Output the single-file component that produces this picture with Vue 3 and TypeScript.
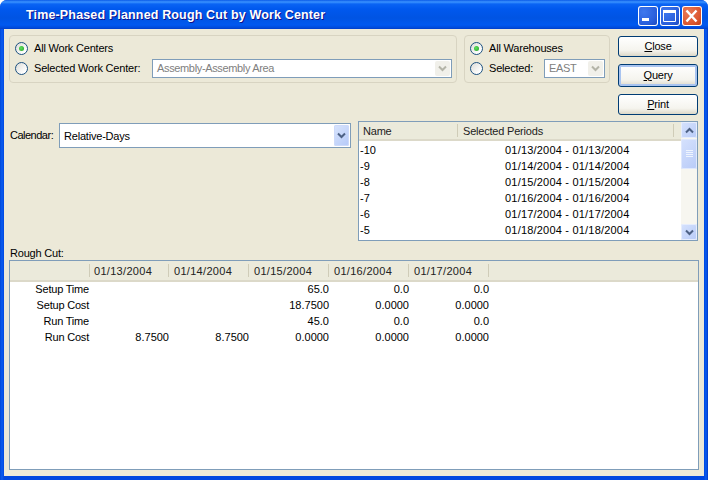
<script setup lang="ts">
const periods = [
  { name: '-10', range: '01/13/2004 - 01/13/2004' },
  { name: '-9', range: '01/14/2004 - 01/14/2004' },
  { name: '-8', range: '01/15/2004 - 01/15/2004' },
  { name: '-7', range: '01/16/2004 - 01/16/2004' },
  { name: '-6', range: '01/17/2004 - 01/17/2004' },
  { name: '-5', range: '01/18/2004 - 01/18/2004' },
]

const dates = ['01/13/2004', '01/14/2004', '01/15/2004', '01/16/2004', '01/17/2004']

const rows = [
  { label: 'Setup Time', values: ['', '', '65.0', '0.0', '0.0'] },
  { label: 'Setup Cost', values: ['', '', '18.7500', '0.0000', '0.0000'] },
  { label: 'Run Time', values: ['', '', '45.0', '0.0', '0.0'] },
  { label: 'Run Cost', values: ['8.7500', '8.7500', '0.0000', '0.0000', '0.0000'] },
]
</script>

<template>
  <div class="window">
    <header class="titlebar">
      <span class="title">Time-Phased Planned Rough Cut by Work Center</span>
      <div class="caption-buttons">
        <span class="cap cap-blue">
          <svg width="20" height="20" viewBox="0 0 20 20"><rect x="4" y="12" width="7" height="3" fill="#fff" /></svg>
        </span>
        <span class="cap cap-blue">
          <svg width="20" height="20" viewBox="0 0 20 20"><path d="M3.5 4.5h12v11h-12z" fill="none" stroke="#fff" /><rect x="3" y="4" width="13" height="3" fill="#fff" /></svg>
        </span>
        <span class="cap cap-red">
          <svg width="20" height="20" viewBox="0 0 20 20"><path d="M4.5 4.5l10 11M14.5 4.5l-10 11" fill="none" stroke="#fff" stroke-width="2.4" /></svg>
        </span>
      </div>
    </header>

    <main class="content">
      <div class="top">
        <section class="group group-centers">
          <div class="radio-row">
            <span class="radio on"></span>
            <span class="tight">All Work Centers</span>
          </div>
          <div class="radio-row">
            <span class="radio"></span>
            <span class="radio-label tight">Selected Work Center:</span>
            <div class="combo disabled wc-combo">
              <span class="combo-text">Assembly-Assembly Area</span>
              <span class="combo-btn">
                <svg width="9" height="7" viewBox="0 0 9 7"><path d="M1 1.5l3.5 3.5 3.5-3.5" fill="none" stroke="#b4b4a8" stroke-width="2" /></svg>
              </span>
            </div>
          </div>
        </section>

        <section class="group group-wh">
          <div class="radio-row">
            <span class="radio on"></span>
            <span class="tight">All Warehouses</span>
          </div>
          <div class="radio-row">
            <span class="radio"></span>
            <span class="radio-label wh-label tight">Selected:</span>
            <div class="combo disabled wh-combo">
              <span class="combo-text">EAST</span>
              <span class="combo-btn">
                <svg width="9" height="7" viewBox="0 0 9 7"><path d="M1 1.5l3.5 3.5 3.5-3.5" fill="none" stroke="#b4b4a8" stroke-width="2" /></svg>
              </span>
            </div>
          </div>
        </section>

        <div class="actions">
          <button class="button" type="button"><u>C</u>lose</button>
          <button class="button default" type="button"><u>Q</u>uery</button>
          <button class="button" type="button"><u>P</u>rint</button>
        </div>
      </div>

      <div class="middle">
        <div class="calendar">
          <label class="cal-label">Calendar:</label>
          <div class="combo cal-combo">
            <span class="combo-text tight">Relative-Days</span>
            <span class="combo-btn active">
              <svg width="9" height="7" viewBox="0 0 9 7"><path d="M1 1.5l3.5 3.5 3.5-3.5" fill="none" stroke="#4d6185" stroke-width="2" /></svg>
            </span>
          </div>
        </div>

        <div class="period-list">
          <div class="period-main">
            <div class="list-head">
              <span class="head-cell name-col tight">Name</span>
              <span class="head-cell period-col tight">Selected Periods</span>
            </div>
            <div class="period-rows">
              <div v-for="p in periods" :key="p.name" class="period-row">
                <span class="period-name">{{ p.name }}</span>
                <span class="period-range">{{ p.range }}</span>
              </div>
            </div>
          </div>
          <div class="scrollbar">
            <span class="scroll-btn">
              <svg width="9" height="7" viewBox="0 0 9 7"><path d="M1 5.5l3.5-3.5 3.5 3.5" fill="none" stroke="#4d6185" stroke-width="2" /></svg>
            </span>
            <span class="scroll-thumb">
              <svg width="7" height="8" viewBox="0 0 7 8"><path d="M0 .5h7M0 2.5h7M0 4.5h7M0 6.5h7" stroke="#eef4fe" /></svg>
            </span>
            <span class="scroll-track"></span>
            <span class="scroll-btn">
              <svg width="9" height="7" viewBox="0 0 9 7"><path d="M1 1.5l3.5 3.5 3.5-3.5" fill="none" stroke="#4d6185" stroke-width="2" /></svg>
            </span>
          </div>
        </div>
      </div>

      <div class="section-label tight">Rough Cut:</div>

      <div class="grid">
        <div class="grid-head">
          <span class="gh-first"></span>
          <span v-for="d in dates" :key="d" class="gh-cell">{{ d }}</span>
        </div>
        <div class="grid-body">
          <div v-for="r in rows" :key="r.label" class="grid-row">
            <span class="cell first tight">{{ r.label }}</span>
            <span v-for="(v, i) in r.values" :key="i" class="cell">{{ v }}</span>
          </div>
        </div>
      </div>
    </main>
  </div>
</template>

<style scoped>
.window {
  width: 708px;
  height: 480px;
  box-sizing: border-box;
  display: flex;
  flex-direction: column;
  border-radius: 7px 7px 0 0;
  font-family: "Liberation Sans", Arial, sans-serif;
  font-size: 11px;
  color: #000;
  overflow: hidden;
  padding: 0 4px 4px;
  background: linear-gradient(90deg, #0047d8 0, #0a5cf0 2px, #0047e0 4px, #0047e0 704px, #0a5cf0 706px, #0038c8 708px);
}

.tight {
  letter-spacing: -0.2px;
}

.titlebar {
  height: 29px;
  flex: none;
  margin: 0 -4px;
  padding: 0 6px 0 26px;
  display: flex;
  align-items: center;
  justify-content: space-between;
  background: linear-gradient(180deg, #0a5ae8 0, #3b93ff 2px, #0a64f4 4px, #0058ee 9px, #0054e3 18px, #0059f0 25px, #0049d8 28px, #003dc8 29px);
}

.title {
  color: #fff;
  font-size: 12.5px;
  font-weight: 700;
  letter-spacing: 0.15px;
  text-shadow: 1px 1px 0 #0f1089;
}

.caption-buttons {
  display: flex;
  gap: 2px;
  margin-top: 3px;
}

.cap {
  width: 20px;
  height: 20px;
  border-radius: 3px;
  box-sizing: border-box;
  box-shadow: inset 0 0 0 1px #fff;
  display: block;
}

.cap svg {
  display: block;
}

.cap-blue {
  background: radial-gradient(circle at 30% 30%, #3f78ee 0, #2a5fdc 60%, #1b44b8 100%);
}

.cap-red {
  background: radial-gradient(circle at 30% 30%, #ea7a56 0, #dc5730 60%, #b93a14 100%);
}

.content {
  flex: 1;
  min-height: 0;
  background: #ece9d8;
  padding: 6px 5px 6px;
  display: flex;
  flex-direction: column;
}

.top {
  display: flex;
  height: 80px;
  flex: none;
}

.group {
  box-sizing: border-box;
  height: 48px;
  border: 1px solid #d8d4c2;
  border-radius: 4px;
  padding: 3px 0 0 5px;
  display: flex;
  flex-direction: column;
  gap: 2px;
}

.group-centers {
  width: 448px;
}

.group-wh {
  width: 146px;
  margin-left: 7px;
}

.radio-row {
  display: flex;
  align-items: center;
  height: 18px;
  white-space: nowrap;
}

.radio {
  width: 13px;
  height: 13px;
  box-sizing: border-box;
  flex: none;
  margin-right: 6px;
  border: 1px solid #1c5180;
  border-radius: 50%;
  background: linear-gradient(135deg, #dcdcd7 0, #fff 80%);
  position: relative;
}

.radio.on::after {
  content: "";
  position: absolute;
  left: 3px;
  top: 3px;
  width: 5px;
  height: 5px;
  border-radius: 50%;
  background: radial-gradient(circle at 40% 40%, #5fe05f, #21a121);
}

.radio-label {
  width: 118px;
  flex: none;
}

.wh-label {
  width: 55px;
}

.combo {
  box-sizing: border-box;
  display: flex;
  align-items: center;
  border: 1px solid #7f9db9;
  background: #fff;
  padding: 1px;
}

.combo.disabled {
  height: 19px;
  color: #808080;
  letter-spacing: -0.35px;
}

.combo.disabled .combo-text {
  padding-left: 3px;
}

.wc-combo {
  width: 300px;
}

.wh-combo {
  width: 61px;
}

.combo-text {
  flex: 1;
  padding-left: 3px;
  overflow: hidden;
}

.combo-btn {
  width: 15px;
  align-self: stretch;
  flex: none;
  display: flex;
  align-items: center;
  justify-content: center;
  background: #f1f0ea;
  border-radius: 2px;
}

.combo-btn.active {
  background: linear-gradient(135deg, #d9e5fd, #b5c9f8);
  box-shadow: inset 0 0 0 1px #cddafa;
}

.actions {
  width: 80px;
  margin-left: 8px;
  padding-top: 1px;
  display: flex;
  flex-direction: column;
}

.button {
  height: 21px;
  width: 80px;
  padding: 0 0 2px;
  flex: none;
  border: 1px solid #003c74;
  border-radius: 3px;
  background: linear-gradient(180deg, #fff 0, #f5f4ee 70%, #dcd8c8 100%);
  font: inherit;
  letter-spacing: -0.2px;
  color: #000;
}

.button + .button {
  margin-top: 7px;
}

.button.default {
  height: 23px;
  box-shadow: inset 0 0 0 2px #a9c4f0;
}

.middle {
  display: flex;
  height: 120px;
  flex: none;
  margin-top: 6px;
}

.calendar {
  width: 349px;
  flex: none;
  display: flex;
  align-items: flex-start;
  padding-top: 2px;
  box-sizing: border-box;
}

.cal-label {
  width: 50px;
  padding-left: 1px;
  box-sizing: border-box;
  line-height: 25px;
  letter-spacing: -0.5px;
}

.cal-combo {
  width: 292px;
  height: 25px;
}

.period-list {
  width: 340px;
  box-sizing: border-box;
  display: flex;
  border: 1px solid #7f9db9;
  background: #fff;
}

.period-main {
  flex: 1;
  min-width: 0;
}

.list-head {
  display: flex;
  height: 19px;
  box-sizing: border-box;
  background: #ebeadb;
  border-bottom: 2px solid #dcd9c9;
}

.head-cell {
  box-sizing: border-box;
  height: 13px;
  margin-top: 2px;
  line-height: 15px;
  padding-left: 4px;
  color: #222;
}

.name-col {
  width: 99px;
  border-right: 1px solid #cfccb8;
}

.period-col {
  width: 216px;
  padding-left: 5px;
  border-right: 1px solid #cfccb8;
}

.period-rows {
  padding-top: 1px;
}

.period-row {
  display: flex;
  height: 16px;
  line-height: 16px;
}

.period-name {
  width: 146px;
  padding-left: 1px;
  box-sizing: border-box;
}

.period-range {
  white-space: nowrap;
  letter-spacing: 0.2px;
}

.scrollbar {
  width: 16px;
  flex: none;
  display: flex;
  flex-direction: column;
  background: #f7f6f0;
}

.scroll-btn,
.scroll-thumb {
  display: flex;
  align-items: center;
  justify-content: center;
  flex: none;
  border-radius: 2px;
  background: linear-gradient(135deg, #d6e2fd, #b8cbf8);
  box-shadow: inset 0 0 0 1px #e6edfd;
  height: 16px;
}

.scroll-thumb {
  height: 30px;
  margin-top: 1px;
  box-shadow: inset 0 0 0 1px #dfe8fd;
}

.scroll-track {
  flex: 1;
}

.section-label {
  height: 19px;
  flex: none;
  line-height: 25px;
  padding-left: 1px;
}

.grid {
  flex: 1;
  min-height: 0;
  border: 1px solid #7f9db9;
  background: #fff;
}

.grid-head {
  display: flex;
  height: 21px;
  box-sizing: border-box;
  background: #ebeadb;
  border-bottom: 2px solid #dcd9c9;
}

.gh-first {
  width: 80px;
  border-right: 1px solid #cfccb8;
  flex: none;
  height: 13px;
  margin-top: 3px;
  margin-left: -1px;
}

.gh-cell {
  width: 79px;
  flex: none;
  height: 13px;
  margin-top: 3px;
  line-height: 14px;
  padding-left: 4px;
  box-sizing: border-box;
  border-right: 1px solid #cfccb8;
  margin-right: 1px;
  color: #222;
  letter-spacing: 0.3px;
}

.grid-row {
  display: flex;
  height: 16px;
  line-height: 14px;
}

.cell {
  width: 80px;
  flex: none;
  text-align: right;
  box-sizing: border-box;
}

.first {
  width: 79px;
}
</style>
